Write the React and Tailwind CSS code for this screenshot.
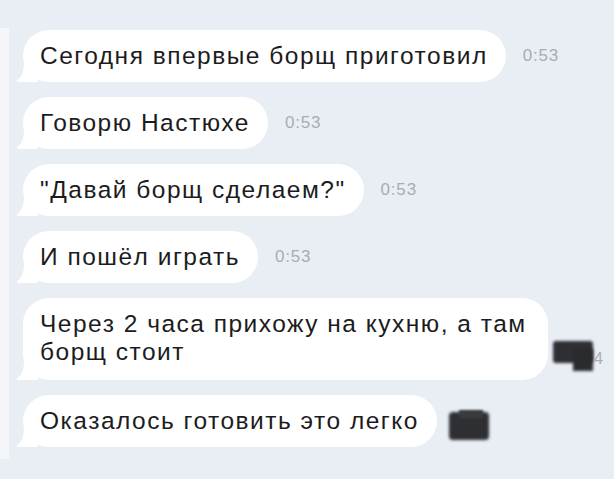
import React from 'react';

const messages = [
  { text: 'Сегодня впервые борщ приготовил', time: '0:53' },
  { text: 'Говорю Настюхе', time: '0:53' },
  { text: '"Давай борщ сделаем?"', time: '0:53' },
  { text: 'И пошёл играть', time: '0:53' },
  { text: 'Через 2 часа прихожу на кухню, а там борщ стоит', hidden: 'big' },
  { text: 'Оказалось готовить это легко', hidden: 'small' },
];

const Tail = () => (
  <svg
    className="absolute left-[-7px] bottom-0"
    width="22"
    height="20"
    viewBox="0 0 22 20"
  >
    <path d="M22 0 L22 20 L4 20 C2 20 0 19 1 18 C6 15 8 10 8 0 Z" fill="#ffffff" />
  </svg>
);

const Censored = ({ kind }) =>
  kind === 'big' ? (
    <div className="relative ml-[5px] mt-[34px] h-[30px] w-[52px]">
      <div className="absolute left-0 top-0 h-[22px] w-[40px] rounded-[3px] bg-[#2e2f33] blur-[1.5px]" />
      <div className="absolute left-[20px] top-[8px] h-[22px] w-[20px] bg-[#2a2b2f] blur-[1.5px]" />
      <span className="absolute left-[41px] top-[6px] text-[16px] text-[#a8acb2]">4</span>
    </div>
  ) : (
    <div className="relative ml-[12px] mt-[8px] h-[30px] w-[46px]">
      <div className="absolute left-0 top-[2px] h-[28px] w-[40px] rounded-[4px] bg-[#2e2f33] blur-[1.5px]" />
      <div className="absolute left-[10px] top-0 h-[8px] w-[24px] bg-[#3a3b3f] blur-[1px]" />
    </div>
  );

export default function App() {
  return (
    <div
      className="flex h-[479px] w-[614px] overflow-hidden bg-[#e9eef5] text-[#1c1c1e]"
      style={{ fontFamily: '"Liberation Sans", Arial, sans-serif' }}
    >
      {/* left strip */}
      <div className="mt-[28px] mb-[20px] w-[9px] bg-[#f4f6fa]" />

      <div className="flex flex-col gap-[15px] pl-[14px] pt-[30px]">
        {messages.map((m, i) => (
          <div key={i} className="flex items-center">
            <div
              className={
                m.hidden === 'big'
                  ? 'relative max-w-[525px] rounded-[26px] bg-white pl-[17px] pr-[18px] pt-[12px] pb-[14px] text-[24.5px] leading-[28px] tracking-[1.5px]'
                  : 'relative max-w-[525px] rounded-[26px] bg-white pl-[17px] pr-[18px] py-[12px] text-[24.5px] leading-[28px] tracking-[1.5px]'
              }
            >
              <Tail />
              <span className="relative">{m.text}</span>
            </div>
            {m.time && (
              <span className="ml-[17px] text-[17px] tracking-[0.8px] text-[#a8acb2]">{m.time}</span>
            )}
            {m.hidden && <Censored kind={m.hidden} />}
          </div>
        ))}
      </div>
    </div>
  );
}
